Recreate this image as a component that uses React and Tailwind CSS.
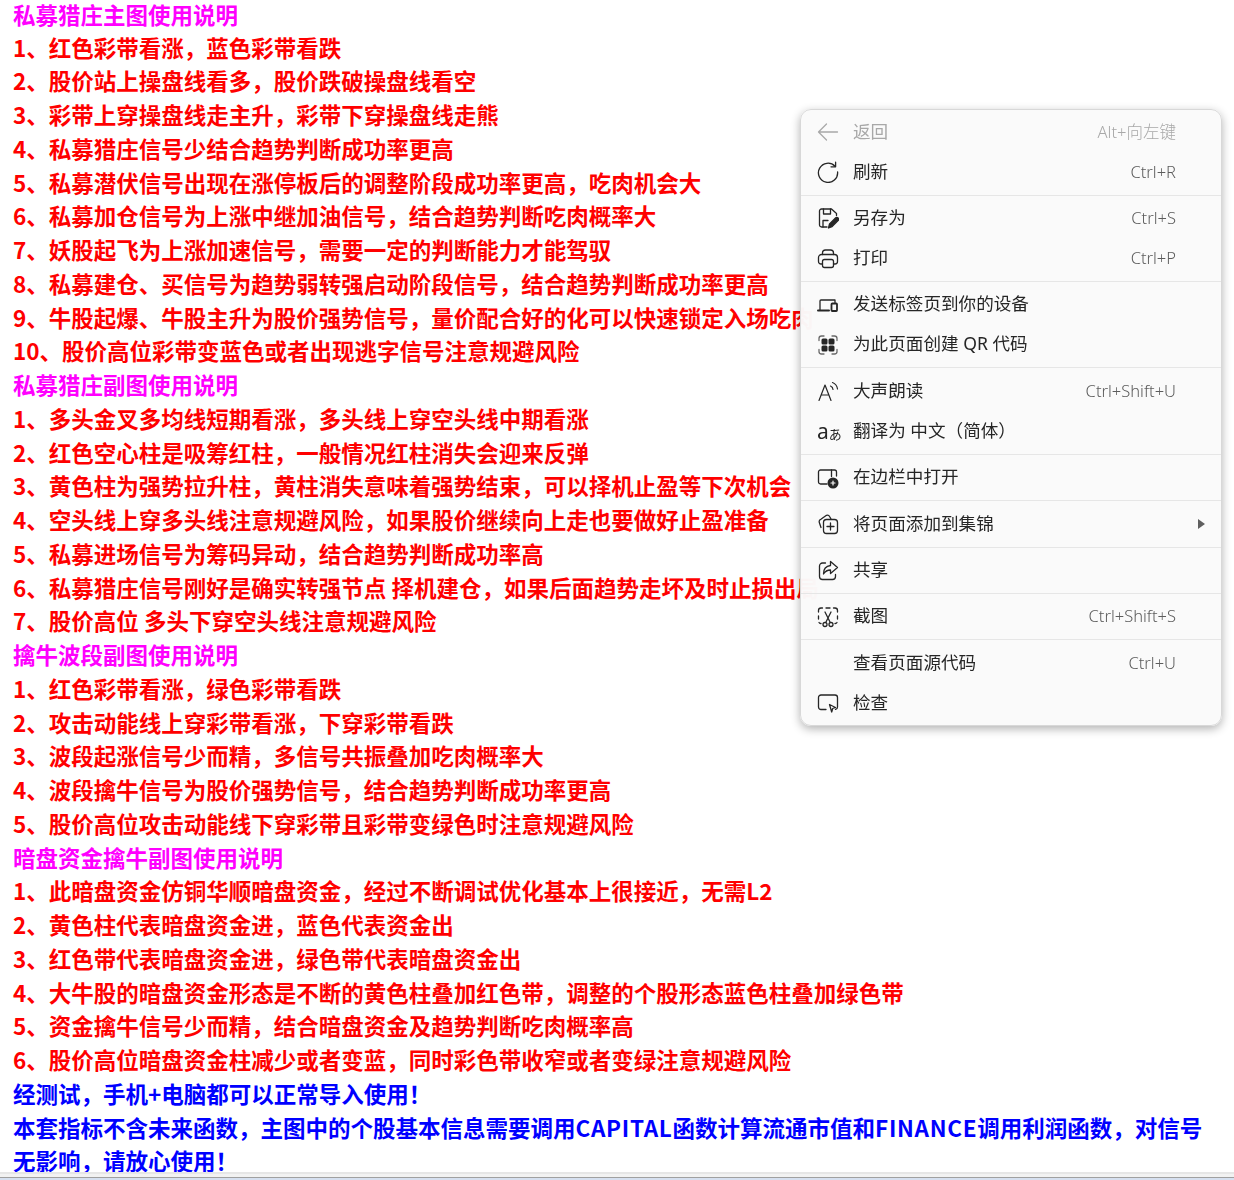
const sections = [
  {
    title: "私募猎庄主图使用说明",
    items: [
      "1、红色彩带看涨，蓝色彩带看跌",
      "2、股价站上操盘线看多，股价跌破操盘线看空",
      "3、彩带上穿操盘线走主升，彩带下穿操盘线走熊",
      "4、私募猎庄信号少结合趋势判断成功率更高",
      "5、私募潜伏信号出现在涨停板后的调整阶段成功率更高，吃肉机会大",
      "6、私募加仓信号为上涨中继加油信号，结合趋势判断吃肉概率大",
      "7、妖股起飞为上涨加速信号，需要一定的判断能力才能驾驭",
      "8、私募建仓、买信号为趋势弱转强启动阶段信号，结合趋势判断成功率更高",
      "9、牛股起爆、牛股主升为股价强势信号，量价配合好的化可以快速锁定入场吃肉",
      "10、股价高位彩带变蓝色或者出现逃字信号注意规避风险",
    ],
  },
  {
    title: "私募猎庄副图使用说明",
    items: [
      "1、多头金叉多均线短期看涨，多头线上穿空头线中期看涨",
      "2、红色空心柱是吸筹红柱，一般情况红柱消失会迎来反弹",
      "3、黄色柱为强势拉升柱，黄柱消失意味着强势结束，可以择机止盈等下次机会",
      "4、空头线上穿多头线注意规避风险，如果股价继续向上走也要做好止盈准备",
      "5、私募进场信号为筹码异动，结合趋势判断成功率高",
      "6、私募猎庄信号刚好是确实转强节点 择机建仓，如果后面趋势走坏及时止损出局",
      "7、股价高位 多头下穿空头线注意规避风险",
    ],
  },
  {
    title: "擒牛波段副图使用说明",
    items: [
      "1、红色彩带看涨，绿色彩带看跌",
      "2、攻击动能线上穿彩带看涨，下穿彩带看跌",
      "3、波段起涨信号少而精，多信号共振叠加吃肉概率大",
      "4、波段擒牛信号为股价强势信号，结合趋势判断成功率更高",
      "5、股价高位攻击动能线下穿彩带且彩带变绿色时注意规避风险",
    ],
  },
  {
    title: "暗盘资金擒牛副图使用说明",
    items: [
      "1、此暗盘资金仿铜华顺暗盘资金，经过不断调试优化基本上很接近，无需L2",
      "2、黄色柱代表暗盘资金进，蓝色代表资金出",
      "3、红色带代表暗盘资金进，绿色带代表暗盘资金出",
      "4、大牛股的暗盘资金形态是不断的黄色柱叠加红色带，调整的个股形态蓝色柱叠加绿色带",
      "5、资金擒牛信号少而精，结合暗盘资金及趋势判断吃肉概率高",
      "6、股价高位暗盘资金柱减少或者变蓝，同时彩色带收窄或者变绿注意规避风险",
    ],
  },
];

function Icon({ children }) {
  return (
    <svg viewBox="0 0 22 22" fill="none" stroke="currentColor" strokeWidth="1.3" strokeLinecap="round" strokeLinejoin="round" className="w-[22px] h-[22px]">
      {children}
    </svg>
  );
}

const icons = {
  back: <Icon><path d="M20.5 11H1.5M9.5 3 1.5 11l8 8" /></Icon>,
  refresh: <Icon><path d="M18 5.2A9.6 9.6 0 1 0 20.6 11" /><path d="M18.6 1.2v4.6H14" /></Icon>,
  saveAs: (
    <Icon>
      <path d="M10 20H4.500a2 2 0 0 1-2-2V4a2 2 0 0 1 2-2h10l5 4.500v2" />
      <path d="M6.500 2v5h7V2M6 20v-6.500h5" />
      <path d="M11.500 21l1-4 6-6a1.800 1.800 0 0 1 2.600 2.600l-6 6z" fill="currentColor" />
    </Icon>
  ),
  print: (
    <Icon>
      <path d="M5.500 7.500V6a3 3 0 0 1 3-3h5a3 3 0 0 1 3 3v1.500" />
      <path d="M5.500 17H4a2.500 2.500 0 0 1-2.500-2.500V10.500A3 3 0 0 1 4.500 7.500h13a3 3 0 0 1 3 3v4A2.500 2.500 0 0 1 18 17h-1.500" />
      <rect x="5.500" y="12.500" width="11" height="8" rx="2" />
    </Icon>
  ),
  device: (
    <Icon>
      <path d="M3 16V7a1 1 0 0 1 1-1h14v2.500" />
      <path d="M1 16.500h11" strokeWidth="2" />
      <rect x="14.500" y="9.500" width="5.500" height="7.500" rx="0.800" strokeWidth="1.800" />
    </Icon>
  ),
  qr: (
    <Icon>
      <path d="M2 6.500V4.500A2.500 2.500 0 0 1 4.500 2h2.500M15 2h2.500A2.500 2.500 0 0 1 20 4.500v2M20 15.500v2a2.500 2.500 0 0 1-2.500 2.500H15M7 20H4.500A2.500 2.500 0 0 1 2 17.500v-2" stroke="#6a6a6a" />
      <rect x="4.500" y="4.500" width="6" height="6" rx="1.500" fill="currentColor" stroke="none" />
      <rect x="11.500" y="4.500" width="6" height="6" rx="1.500" fill="currentColor" stroke="none" />
      <rect x="4.500" y="11.500" width="6" height="6" rx="1.500" fill="currentColor" stroke="none" />
      <rect x="11.500" y="11.500" width="6" height="6" rx="1.500" fill="currentColor" stroke="none" />
    </Icon>
  ),
  read: (
    <Icon>
      <path d="M2 20.500 8 5l6 15.500M4.200 15h7.600" strokeWidth="1.200" />
      <path d="M13.500 6a4 4 0 0 1 2.500 3.500M15.500 2.500a8 8 0 0 1 5 6.500" strokeWidth="1.200" />
    </Icon>
  ),
  sidebar: (
    <Icon>
      <path d="M10 17H3.500a2 2 0 0 1-2-2V5a2 2 0 0 1 2-2h14a2 2 0 0 1 2 2v4" />
      <path d="M14.500 3v6.500" />
      <circle cx="16" cy="16" r="5.500" fill="currentColor" stroke="none" />
      <path d="M16 14v4M14 16h4" stroke="#fafafa" strokeWidth="1.200" />
    </Icon>
  ),
  collection: (
    <Icon>
      <path d="M4 14.500 2.300 9.500a2.500 2.500 0 0 1 1.600-3.200L9.500 2.300A2.500 2.500 0 0 1 12.600 3.500L14 6" />
      <rect x="6.500" y="6.500" width="14" height="14" rx="3" />
      <path d="M13.500 10v7M10 13.500h7" />
    </Icon>
  ),
  share: (
    <Icon>
      <path d="M8.500 4H5.500a3 3 0 0 0-3 3v10.500a3 3 0 0 0 3 3h10a3 3 0 0 0 3-3v-2" />
      <path d="M13.500 2.500l7 6-7 6v-3.500c-3.500 0-5.500 1.500-7 4 0-5 2.500-8 7-8.500z" />
    </Icon>
  ),
  capture: (
    <Icon>
      <path d="M1.500 6V4.500A2.500 2.500 0 0 1 4 2h1.500M9 2h4M16.500 2H18a2.500 2.500 0 0 1 2.500 2.500V6M20.500 10v3M20 16.500a2 2 0 0 1-2 1M1.500 10v3M2 16.500a2 2 0 0 0 2 1" />
      <path d="M8 6 13 16M14 6 9 16" />
      <circle cx="8" cy="18.500" r="2" />
      <circle cx="14" cy="18.500" r="2" />
    </Icon>
  ),
  inspect: (
    <Icon>
      <path d="M9 17.500H4a2.500 2.500 0 0 1-2.500-2.500V5.500A2.500 2.500 0 0 1 4 3h14a2.500 2.500 0 0 1 2.500 2.500V15a2.500 2.500 0 0 1-2 2.400" />
      <path d="M12.500 12.500l6 3-2.800 1-1 3.500z" />
    </Icon>
  ),
};

const menuGroups = [
  [
    { icon: "back", label: "返回", hint: "Alt+向左键", disabled: true },
    { icon: "refresh", label: "刷新", hint: "Ctrl+R" },
  ],
  [
    { icon: "saveAs", label: "另存为", hint: "Ctrl+S" },
    { icon: "print", label: "打印", hint: "Ctrl+P" },
  ],
  [
    { icon: "device", label: "发送标签页到你的设备" },
    { icon: "qr", label: "为此页面创建 QR 代码" },
  ],
  [
    { icon: "read", label: "大声朗读", hint: "Ctrl+Shift+U" },
    { icon: "translate", label: "翻译为 中文（简体）" },
  ],
  [{ icon: "sidebar", label: "在边栏中打开" }],
  [{ icon: "collection", label: "将页面添加到集锦", arrow: true }],
  [{ icon: "share", label: "共享" }],
  [{ icon: "capture", label: "截图", hint: "Ctrl+Shift+S" }],
  [
    { label: "查看页面源代码", hint: "Ctrl+U" },
    { icon: "inspect", label: "检查" },
  ],
];

function MenuRow({ item }) {
  return (
    <div className={"flex items-center h-10 pl-4 pr-[45px] relative " + (item.disabled ? "text-[#a8a8a8]" : "text-[#262626]")}>
      <span className="w-[22px] h-[22px] mr-[14px] shrink-0">
        {item.icon === "translate" ? (
          <span className="flex items-baseline leading-[22px]">
            <span className="text-[21px]">a</span>
            <span className="text-[13px]">あ</span>
          </span>
        ) : (
          icons[item.icon]
        )}
      </span>
      <span className="text-[17.6px] leading-none -mt-px">{item.label}</span>
      {item.hint && (
        <span className={"ml-auto text-[16.5px] font-light " + (item.disabled ? "text-[#a8a8a8]" : "text-[#5c5c5c]")}>{item.hint}</span>
      )}
      {item.arrow && (
        <span className="absolute right-4 top-1/2 -translate-y-1/2 w-0 h-0 border-y-[5px] border-y-transparent border-l-[7px] border-l-[#5f5f5f]" />
      )}
    </div>
  );
}

export default function App() {
  return (
    <div className="relative flex flex-col h-[1180px] overflow-hidden bg-white font-['Noto_Sans','Noto_Sans_CJK_SC',sans-serif]">
      {/* Article */}
      <div className="flex-1 min-h-0 px-[13px] text-[22.5px] leading-[33.75px] font-bold font-['Noto_Sans_CJK_SC',sans-serif]">
        {sections.map((s, i) => (
          <div key={s.title}>
            <p className={"text-[#ff00ff] " + (i === 0 ? "leading-[29px] mb-[1.5px]" : "")}>{s.title}</p>
            {s.items.map((t) => (
              <p key={t} className="text-[#ff0000]">{t}</p>
            ))}
          </div>
        ))}
        <p className="text-[#0000ff]">经测试，手机+电脑都可以正常导入使用！</p>
        <p className="text-[#0000ff]">
          本套指标不含未来函数，主图中的个股基本信息需要调用<span className="tracking-[0.7px]">CAPITAL</span>函数计算流通市值和<span className="tracking-[0.7px]">FINANCE</span>调用利润函数，对信号<br />无影响，请放心使用！
        </p>
      </div>

      {/* Window edge */}
      <div className="h-2 shrink-0 flex flex-col">
        <div className="h-[2px] bg-[#e6e6e6]" />
        <div className="h-[3px] bg-[#f2f2f2]" />
        <div className="h-px bg-[#a0a0a0]" />
        <div className="h-[2px] bg-[#d6e0f0]" />
      </div>

      {/* Context menu */}
      <div className="absolute left-[800px] top-[109px] w-[422px] pt-[2px] pb-[2px] rounded-[11px] bg-[#fafafa]/95 backdrop-blur-xl border border-[#d8d8d8] shadow-[0_3px_10px_rgba(0,0,0,0.3)]">
        {menuGroups.map((group, i) => (
          <div key={i}>
            {i > 0 && <div className="my-[2.7px] h-px bg-[#e6e6e6]" />}
            {group.map((item) => (
              <MenuRow key={item.label} item={item} />
            ))}
          </div>
        ))}
      </div>
    </div>
  );
}
